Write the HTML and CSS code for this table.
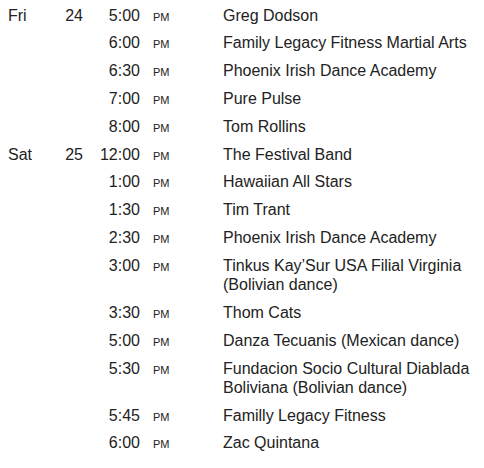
FILE: index.html
```html
<!DOCTYPE html>
<html>
<head>
<meta charset="utf-8">
<link rel="stylesheet" href="styles.css">
</head>
<body>
<table class="schedule">
  <colgroup>
    <col class="c-day"><col class="c-date"><col class="c-time"><col class="c-ampm"><col class="c-name">
  </colgroup>
  <tbody>
    <tr><td class="day">Fri</td><td class="date">24</td><td class="time">5:00</td><td class="ampm"><span class="ap">pm</span></td><td class="name">Greg Dodson</td></tr>
    <tr><td class="day"></td><td class="date"></td><td class="time">6:00</td><td class="ampm"><span class="ap">pm</span></td><td class="name">Family Legacy Fitness Martial Arts</td></tr>
    <tr><td class="day"></td><td class="date"></td><td class="time">6:30</td><td class="ampm"><span class="ap">pm</span></td><td class="name">Phoenix Irish Dance Academy</td></tr>
    <tr><td class="day"></td><td class="date"></td><td class="time">7:00</td><td class="ampm"><span class="ap">pm</span></td><td class="name">Pure Pulse</td></tr>
    <tr><td class="day"></td><td class="date"></td><td class="time">8:00</td><td class="ampm"><span class="ap">pm</span></td><td class="name">Tom Rollins</td></tr>
    <tr><td class="day">Sat</td><td class="date">25</td><td class="time">12:00</td><td class="ampm"><span class="ap">pm</span></td><td class="name">The Festival Band</td></tr>
    <tr><td class="day"></td><td class="date"></td><td class="time">1:00</td><td class="ampm"><span class="ap">pm</span></td><td class="name">Hawaiian All Stars</td></tr>
    <tr><td class="day"></td><td class="date"></td><td class="time">1:30</td><td class="ampm"><span class="ap">pm</span></td><td class="name">Tim Trant</td></tr>
    <tr><td class="day"></td><td class="date"></td><td class="time">2:30</td><td class="ampm"><span class="ap">pm</span></td><td class="name">Phoenix Irish Dance Academy</td></tr>
    <tr><td class="day"></td><td class="date"></td><td class="time">3:00</td><td class="ampm"><span class="ap">pm</span></td><td class="name">Tinkus Kay’Sur USA Filial Virginia (Bolivian dance)</td></tr>
    <tr><td class="day"></td><td class="date"></td><td class="time">3:30</td><td class="ampm"><span class="ap">pm</span></td><td class="name">Thom Cats</td></tr>
    <tr><td class="day"></td><td class="date"></td><td class="time">5:00</td><td class="ampm"><span class="ap">pm</span></td><td class="name">Danza Tecuanis (Mexican dance)</td></tr>
    <tr><td class="day"></td><td class="date"></td><td class="time">5:30</td><td class="ampm"><span class="ap">pm</span></td><td class="name">Fundacion Socio Cultural Diablada Boliviana (Bolivian dance)</td></tr>
    <tr><td class="day"></td><td class="date"></td><td class="time">5:45</td><td class="ampm"><span class="ap">pm</span></td><td class="name">Familly Legacy Fitness</td></tr>
    <tr><td class="day"></td><td class="date"></td><td class="time">6:00</td><td class="ampm"><span class="ap">pm</span></td><td class="name">Zac Quintana</td></tr>
  </tbody>
</table>
</body>
</html>
```
FILE: styles.css
```css
html, body {
  margin: 0;
  padding: 0;
  background: #fff;
}
body {
  font-family: "Liberation Sans", Arial, sans-serif;
  font-size: 16px;
  color: #222;
  padding-top: 1.4px;
}
.schedule {
  border-collapse: collapse;
  table-layout: fixed;
  width: 484px;
}
.c-day { width: 48px; }
.c-date { width: 40px; }
.c-time { width: 57px; }
.c-ampm { width: 78px; }
.c-name { width: 261px; }
.schedule td {
  padding: 4.25px 0;
  line-height: 19.3px;
  vertical-align: top;
}
.schedule td.day { padding-left: 8px; }
.schedule td.date { text-align: right; padding-right: 5px; }
.schedule td.time { text-align: right; padding-right: 5px; }
.schedule td.ampm { padding-left: 8px; }
.ap {
  text-transform: uppercase;
  font-size: 11px;
  line-height: 1;
}
.schedule td.name { padding-right: 4px; }
```
